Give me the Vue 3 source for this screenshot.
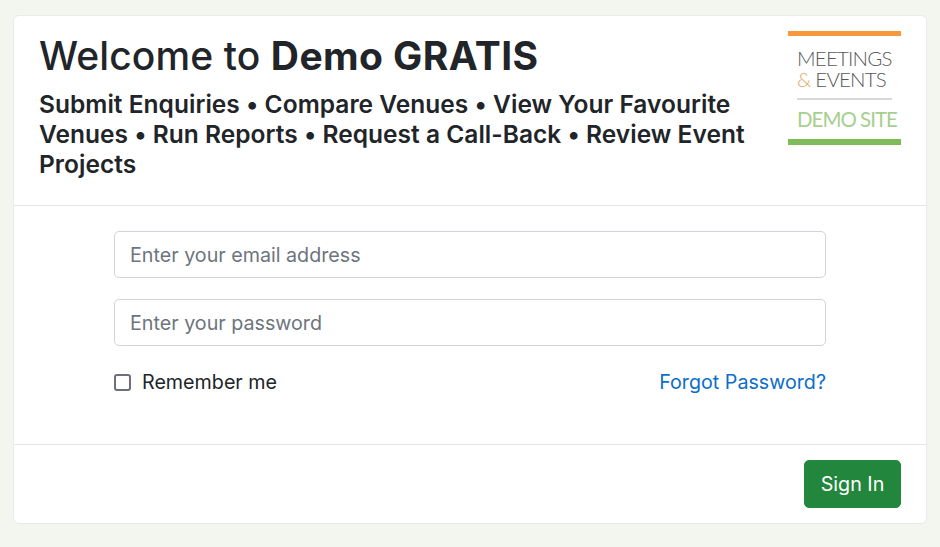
<template>
  <div class="page">
    <div class="card">
      <div class="card-header">
        <div class="intro">
          <h1>Welcome to <strong>Demo GRATIS</strong></h1>
          <p>Submit Enquiries • Compare Venues • View Your Favourite Venues • Run Reports • Request a Call-Back • Review Event Projects</p>
        </div>
        <div class="logo">
          <div class="logo-name">MEETINGS</div>
          <div class="logo-name"><span class="amp">&amp;</span> EVENTS</div>
          <div class="logo-rule"></div>
          <div class="logo-demo">DEMO SITE</div>
        </div>
      </div>
      <form class="card-body" @submit.prevent>
        <input v-model="email" class="field" type="email" placeholder="Enter your email address" />
        <input v-model="password" class="field" type="password" placeholder="Enter your password" />
        <div class="options">
          <label class="remember">
            <input v-model="remember" type="checkbox" />
            <span>Remember me</span>
          </label>
          <a href="#" class="forgot">Forgot Password?</a>
        </div>
      </form>
      <div class="card-footer">
        <button type="button" class="signin">Sign In</button>
      </div>
    </div>
  </div>
</template>
<script setup>
import { ref } from "vue";

const email = ref("");
const password = ref("");
const remember = ref(false);
</script>
<style>
html,
body {
  margin: 0;
  background: #f3f5ef;
}
</style>
<style scoped>
.page {
  box-sizing: border-box;
  height: 547px;
  padding: 15px 13px 23px;
  font-family: "Inter", "Liberation Sans", sans-serif;
  color: #212529;
}

.card {
  box-sizing: border-box;
  height: 509px;
  display: flex;
  flex-direction: column;
  background: #fff;
  border: 1px solid #e9ebe8;
  border-radius: 6px;
}

.card-header {
  box-sizing: border-box;
  height: 190px;
  display: flex;
  justify-content: space-between;
  padding: 15px 25px 0;
  border-bottom: 1px solid #e4e6e4;
}

.intro {
  width: 722px;
}

h1 {
  margin: 0;
  font-size: 39px;
  line-height: 50px;
  font-weight: 500;
  letter-spacing: 0.1px;
}

h1 strong {
  font-weight: 700;
  letter-spacing: 0.4px;
}

p {
  margin: 8px 0 0;
  font-size: 24.5px;
  line-height: 30px;
  font-weight: 600;
  letter-spacing: 0.03px;
}

.logo {
  box-sizing: border-box;
  width: 113px;
  height: 114px;
  flex-shrink: 0;
  border-top: 5px solid #f7983a;
  border-bottom: 6px solid #7dbb5b;
  padding: 12px 9px 0;
  font-family: "Lato", sans-serif;
  font-weight: 300;
  color: #585858;
  text-align: left;
}

.logo-name {
  font-size: 20.5px;
  line-height: 21px;
  letter-spacing: -0.8px;
  white-space: nowrap;
}

.amp {
  color: #e5ab66;
}

.logo-rule {
  height: 2px;
  background: #d8d8d8;
  margin: 8px 0 0;
}

.logo-demo {
  margin-top: 7px;
  font-size: 20.5px;
  line-height: 24px;
  letter-spacing: -1px;
  font-weight: 400;
  color: #a6cf90;
  white-space: nowrap;
}

.card-body {
  flex: 1;
  display: flex;
  flex-direction: column;
  gap: 21px;
  padding: 25px 100px 0;
}

.field {
  box-sizing: border-box;
  width: 100%;
  height: 47px;
  padding: 1px 15px 0;
  border: 1px solid #ced4da;
  border-radius: 5px;
  font: inherit;
  font-size: 19.7px;
  color: #212529;
  outline: 0;
}

.field::placeholder {
  color: #6c757d;
  opacity: 1;
}

.options {
  display: flex;
  justify-content: space-between;
  align-items: center;
  margin-top: 3px;
  font-size: 19.7px;
  line-height: 24px;
}

.remember {
  display: flex;
  align-items: center;
  gap: 11px;
}

.remember input {
  appearance: none;
  box-sizing: border-box;
  width: 17px;
  height: 17px;
  margin: 0;
  border: 2px solid #6e7079;
  border-radius: 3px;
  background: #fff;
}

.forgot {
  color: #0d6ec9;
  text-decoration: none;
}

.card-footer {
  box-sizing: border-box;
  height: 79px;
  display: flex;
  justify-content: flex-end;
  padding: 15px 25px 0;
  border-top: 1px solid #e4e6e4;
}

.signin {
  width: 97px;
  height: 48px;
  border: 1px solid #1f8a3c;
  border-radius: 5px;
  background: #22873d;
  color: #fff;
  font: inherit;
  font-size: 19.7px;
}
</style>
